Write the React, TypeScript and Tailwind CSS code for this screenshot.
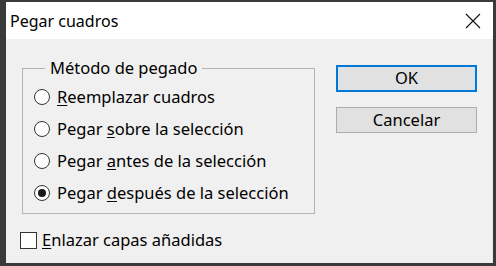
import React from 'react';

const font = { fontFamily: '"Noto Sans", "Segoe UI", sans-serif' };

function Radio({ label, checked = false }: { label: string[]; checked?: boolean }) {
  return (
    <div className="flex items-center h-[32px]">
      <span className="w-[16px] h-[16px] rounded-full border border-[#333] bg-white flex items-center justify-center">
        {checked && <span className="w-[8px] h-[8px] rounded-full bg-[#1a1a1a]" />}
      </span>
      <span className="ml-[7px] text-[16.5px] text-black leading-none">
        {label[0]}
        <span className="underline underline-offset-2">{label[1]}</span>
        {label[2]}
      </span>
    </div>
  );
}

export default function App() {
  return (
    <div
      className="w-[496px] h-[266px] bg-[#3a3a3a] pl-[6px] pt-[2px] pr-[3px] pb-[3px] flex"
      style={font}
    >
      <div className="flex-1 flex flex-col bg-white">
        {/* Title bar */}
        <div className="h-[37px] flex items-center justify-between pl-[4px] pr-[12px]">
          <span className="text-[16px] text-black">Pegar cuadros</span>
          <svg width="16" height="16" viewBox="0 0 16 16" className="text-[#111]">
            <path d="M1 1 L15 15 M15 1 L1 15" stroke="currentColor" strokeWidth="1.1" />
          </svg>
        </div>

        {/* Body */}
        <div className="flex-1 bg-[#f0f0f0] flex border-r border-[#e4e4e4]">
          <div className="pl-[16px] pt-[19px] flex flex-col">
            <fieldset className="w-[293px] h-[156px] border border-[#b4b4b4] pl-[11px]">
              <legend className="ml-[11px] px-[5px] text-[16.5px] text-black leading-[20px]">Método de pegado</legend>
              <div className="pt-[3px] flex flex-col">
                <Radio label={['', 'R', 'eemplazar cuadros']} />
                <Radio label={['Pegar ', 's', 'obre la selección']} />
                <Radio label={['Pegar ', 'a', 'ntes de la selección']} />
                <Radio label={['Pegar ', 'd', 'espués de la selección']} checked />
              </div>
            </fieldset>
            <div className="flex items-center mt-[18px] -ml-[2px]">
              <span className="w-[17px] h-[17px] border border-[#333] bg-white" />
              <span className="ml-[5px] text-[16.5px] text-black leading-none">
                <span className="underline underline-offset-2">E</span>nlazar capas añadidas
              </span>
            </div>
          </div>

          <div className="ml-auto pr-[15px] pt-[26px] flex flex-col gap-[15px]">
            <button className="w-[141px] h-[27px] border-2 border-[#0078d7] bg-[#e1e1e1] text-[16.5px] text-black leading-none">
              OK
            </button>
            <button className="w-[141px] h-[26px] border border-[#adadad] bg-[#e1e1e1] text-[16.5px] text-black leading-none">
              Cancelar
            </button>
          </div>
        </div>
      </div>
    </div>
  );
}
